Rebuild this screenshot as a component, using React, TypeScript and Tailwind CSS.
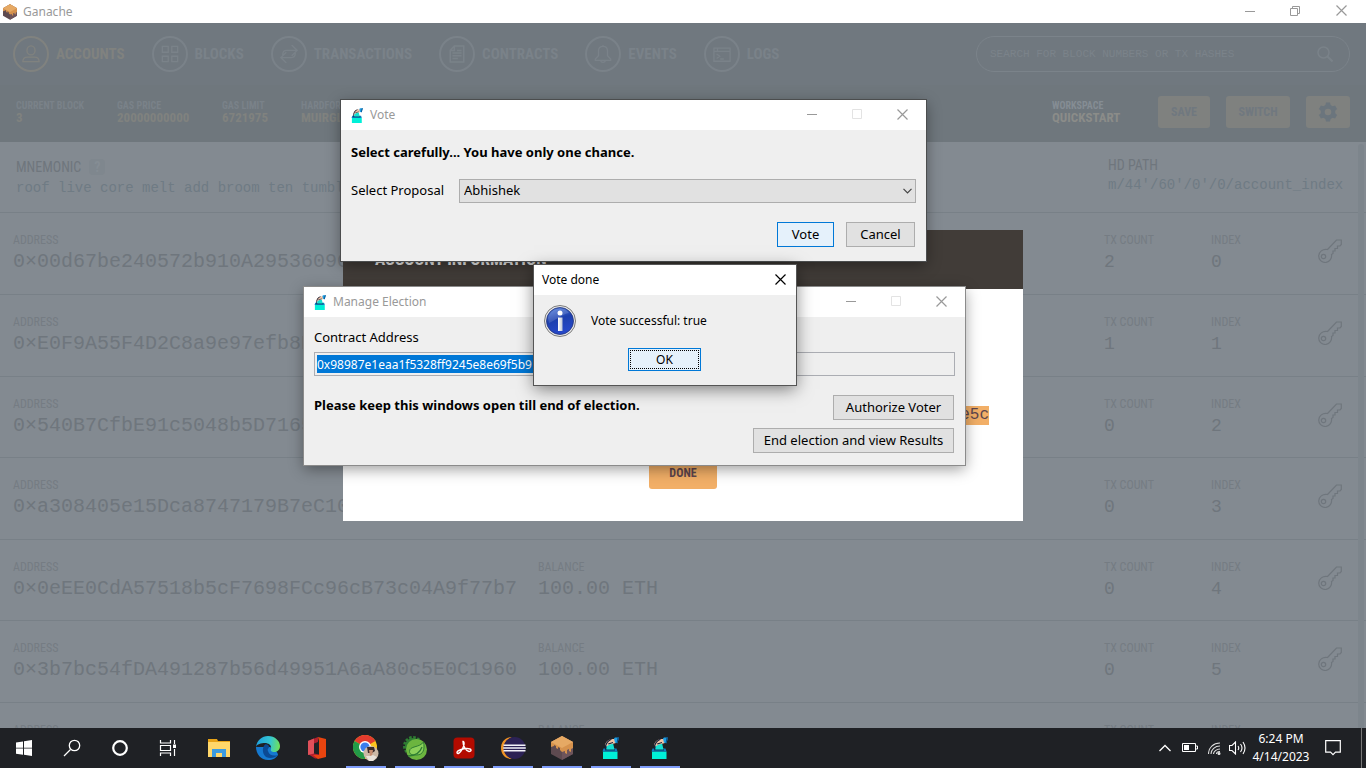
import React from "react";

const condensed = "font-['Roboto_Condensed','Liberation_Sans_Narrow','Roboto',sans-serif]";
const mono = "font-['Liberation_Mono',monospace]";

type IconProps = { className?: string };

function CakeIcon({ className }: IconProps) {
  return (
    <svg viewBox="0 0 22 24" className={className} aria-hidden="true">
      <path d="M11 0 22 6v12l-11 6L0 18V6z" fill="#5e4a50" />
      <path d="M11 12v12l11-6V6z" fill="#6d545b" />
      <path d="M11 0 22 6v6l-2 1v3l-2-1v-2l-2 1v4l-2-1v-2l-3 1-2-2v-2l-2-1v2l-2-1v-2l-2-1v1L0 11V6z" fill="#d6924d" />
      <path d="M11 0 22 6l-11 6L0 6z" fill="#e6a964" />
    </svg>
  );
}

function BallotIcon({ className }: IconProps) {
  return (
    <svg viewBox="0 0 17 22" className={className} aria-hidden="true">
      <path d="M1 14.500h14.500V22H1z" fill="#00f0d8" />
      <path d="M1.500 11.500h13l1 3H.500z" fill="#0c7fc0" />
      <path d="M3 12h10v1.500H3z" fill="#083a5e" />
      <path d="M4.500 7.500 11 6l1.500 6.500h-8z" fill="#14e0d2" />
      <path d="M3 8c1-4 4-6 9.500-6l1.500 1v3l-6 1.500-4 2z" fill="#f4c3a4" />
      <path d="M3 12c-.5-5 2-8.500 6-10l.5.7C6 4.500 4 7 4 12zM6 6.500l5-1.500v.9L6.500 7.500z" fill="#14203c" />
      <path d="m12 1.500 1-1h4l-1.500 5.800-2.500-.5z" fill="#1c9ee4" />
      <path d="M15.500.5H17l-1.500 5.800-1-.3z" fill="#0b4d86" />
    </svg>
  );
}

function CloseGlyph() {
  return (
    <svg viewBox="0 0 11 11" className="size-[11px]" fill="none" stroke="currentColor" strokeWidth="1.200" aria-hidden="true">
      <path d="m.5.5 10 10M10.5.5l-10 10" />
    </svg>
  );
}

function MinimizeGlyph() {
  return (
    <svg viewBox="0 0 10 10" className="size-[10px]" fill="none" stroke="currentColor" aria-hidden="true">
      <path d="M0 5.5h10" />
    </svg>
  );
}

function MaximizeGlyph() {
  return (
    <svg viewBox="0 0 10 10" className="size-[10px]" fill="none" stroke="currentColor" aria-hidden="true">
      <path d="M.5.5h9v9h-9z" />
    </svg>
  );
}

function RestoreGlyph() {
  return (
    <svg viewBox="0 0 10 10" className="size-[10px]" fill="none" stroke="currentColor" aria-hidden="true">
      <path d="M.5 2.5h7v7h-7zM2.5 2.5v-2h7v7h-2" />
    </svg>
  );
}

const stroke = { fill: "none", stroke: "currentColor", strokeWidth: 1.5 } as const;

const navItems: { label: string; icon: React.ReactNode }[] = [
  {
    label: "ACCOUNTS",
    icon: (
      <g {...stroke}>
        <ellipse cx="10" cy="6" rx="4.500" ry="5" />
        <path d="M1 18.500c0-4 2-5 5-5h8c3 0 5 1 5 5z" />
      </g>
    ),
  },
  {
    label: "BLOCKS",
    icon: (
      <g {...stroke}>
        <path d="M1.500 1.500h6.500v6.500h-6.500zM12 1.500h6.500v6.500H12zM1.500 12.500h6.500v6h-6.500zM12 12.500h6.500v6H12z" />
      </g>
    ),
  },
  {
    label: "TRANSACTIONS",
    icon: (
      <g {...stroke}>
        <path d="M3 11c0-4 2-5 4-5h12M13 0l6 6-6 6M17 9c0 4-2 5-4 5H1M7 8l-6 6 6 6" />
      </g>
    ),
  },
  {
    label: "CONTRACTS",
    icon: (
      <g {...stroke} strokeWidth={1.7}>
        <path d="M7 1h10.500v18h-15V6zM7 1v5H2.500M5 9h10M5 12h10M5 15h6M10 6h5" />
      </g>
    ),
  },
  {
    label: "EVENTS",
    icon: (
      <g {...stroke}>
        <path d="M10 1.500c-3.500 0-5 2-5 5v5.500l-3.500 3.500v1.500h17v-1.500L15 12V6.500c0-3-1.500-5-5-5zM7.500 17c0 3 5 3 5 0M10 0v2" />
      </g>
    ),
  },
  {
    label: "LOGS",
    icon: (
      <g {...stroke}>
        <path d="M1 3.500h18v14.500H1zM1 7h18M4 10l3.500 2.500L4 15M8 15.500h4M5 3.500V7" />
      </g>
    ),
  },
];

const stats = [
  { label: "CURRENT BLOCK", value: "3", width: "w-[101px]" },
  { label: "GAS PRICE", value: "20000000000", width: "w-[105px]" },
  { label: "GAS LIMIT", value: "6721975", width: "w-[79px]" },
  { label: "HARDFORK", value: "MUIRGLACIER", width: "w-[100px]" },
];

const accounts = [
  { address: "0×00d67be240572b910A29536090", balance: "", tx: 2 },
  { address: "0×E0F9A55F4D2C8a9e97efb8B", balance: "", tx: 1 },
  { address: "0×540B7CfbE91c5048b5D7165", balance: "", tx: 0 },
  { address: "0×a308405e15Dca8747179B7eC10", balance: "", tx: 0 },
  { address: "0×0eEE0CdA57518b5cF7698FCc96cB73c04A9f77b7", balance: "100.00 ETH", tx: 0 },
  { address: "0×3b7bc54fDA491287b56d49951A6aA80c5E0C1960", balance: "100.00 ETH", tx: 0 },
  { address: "", balance: "", tx: 0 },
];

function Header() {
  return (
    <header className="bg-[#70787f] text-[#7a8289]">
      <div className="flex h-[62px] items-center justify-between pl-[13px] pr-4">
        <nav className="flex gap-[27px]">
          {navItems.map((item, i) => (
            <a
              key={item.label}
              href="#"
              className={`flex items-center gap-[7px] text-[15px] font-bold ${condensed} ${i === 0 ? "text-[#80827f]" : ""}`}
            >
              <span className="flex size-9 items-center justify-center rounded-full border-2 border-current">
                <svg viewBox="0 0 20 20" className="size-[18px]" aria-hidden="true">
                  {item.icon}
                </svg>
              </span>
              {item.label}
            </a>
          ))}
        </nav>
        <div className="flex h-9 w-[374px] items-center rounded-full border border-[#7b838a] pl-[13px] pr-4">
          <input
            aria-label="Search"
            placeholder="SEARCH FOR BLOCK NUMBERS OR TX HASHES"
            className={`min-w-0 flex-1 bg-transparent text-[11px] outline-none placeholder:text-[#7b838a] ${mono}`}
          />
          <svg viewBox="0 0 16 16" className="size-4" {...stroke} aria-hidden="true">
            <circle cx="6.500" cy="6.500" r="5.500" />
            <path d="m10.500 10.500 5 5" strokeWidth="2" />
          </svg>
        </div>
      </div>
      <div className="flex h-[57px] items-center justify-between bg-[#6f777d] px-4 pb-1">
        <dl className={`flex font-bold ${condensed}`}>
          {stats.map((s) => (
            <div key={s.label} className={s.width}>
              <dt className="text-[10px] leading-3">{s.label}</dt>
              <dd className="text-[13px] leading-3 text-[#80827f]">{s.value}</dd>
            </div>
          ))}
        </dl>
        <div className={`flex items-center gap-4 ${condensed}`}>
          <dl className="w-[90px] font-bold">
            <dt className="text-[10px] leading-3 text-[#858d94]">WORKSPACE</dt>
            <dd className="text-[13px] leading-3 text-[#8b8c89]">QUICKSTART</dd>
          </dl>
          <button className="h-8 w-[52px] rounded-[3px] bg-[#7f817f] text-xs font-bold text-[#70787f]">SAVE</button>
          <button className="h-8 w-16 rounded-[3px] bg-[#7f817f] text-xs font-bold text-[#70787f]">SWITCH</button>
          <button aria-label="Settings" className="flex h-8 w-11 items-center justify-center rounded-[3px] bg-[#7f817f] text-[#6b757d]">
            <svg viewBox="0 0 20 20" className="size-5" fill="currentColor" aria-hidden="true">
              <path
                fillRule="evenodd"
                d="M8 .5h4l.6 2.600 2 1.100 2.500-.8 2 3.500-1.900 1.900v2.400l1.900 1.900-2 3.500-2.500-.8-2 1.100-.6 2.600H8l-.6-2.600-2-1.100-2.500.8-2-3.500 1.900-1.900V8.800L.9 6.900l2-3.500 2.500.8 2-1.100zM10 6.700a3.300 3.300 0 1 0 0 6.600 3.300 3.300 0 0 0 0-6.600z"
              />
            </svg>
          </button>
        </div>
      </div>
    </header>
  );
}

function Accounts() {
  const label = `text-xs leading-4 text-[#757c83] ${condensed}`;
  return (
    <main className="relative min-h-0 flex-1 overflow-hidden bg-[#838a91] text-[#6f767d]">
      <section className="flex h-[71px] justify-between border-b border-[#788087] px-4">
        <div className="pt-[17px]">
          <h2 className={`flex items-center gap-2 text-sm leading-4 ${condensed}`}>
            MNEMONIC
            <span className="flex h-4 w-4 items-center justify-center rounded bg-[#7f878e] font-bold text-[#858d94]">?</span>
          </h2>
          <p className={`mt-[3px] text-sm leading-5 text-[#6f7b84] ${mono}`}>roof live core melt add broom ten tumble</p>
        </div>
        <div className="w-[242px] pt-[15px]">
          <h2 className={`text-sm leading-4 ${condensed}`}>HD PATH</h2>
          <p className={`mt-[2px] text-sm leading-5 text-[#6f7b84] ${mono}`}>m/44'/60'/0'/0/account_index</p>
        </div>
      </section>
      <table className="w-full table-fixed border-collapse">
        <colgroup>
          <col className="w-[525px]" />
          <col />
          <col className="w-[107px]" />
          <col className="w-[102px]" />
          <col className="w-[60px]" />
        </colgroup>
        <tbody>
          {accounts.map((a, i) => (
            <tr key={i} className="h-[81px] border-b border-[#788087] even:h-[82px]">
              <td className="pl-[13px]">
                <div className={label}>ADDRESS</div>
                <div className={`mt-0.5 h-6 whitespace-nowrap text-[20px] leading-6 ${mono}`}>{a.address}</div>
              </td>
              <td className="pl-[13px]">
                <div className={label}>BALANCE</div>
                <div className={`mt-0.5 h-6 text-[20px] leading-6 ${mono}`}>{a.balance}</div>
              </td>
              <td className="pl-[7px]">
                <div className={label}>TX COUNT</div>
                <div className={`mt-0.5 h-6 text-lg leading-6 ${mono}`}>{a.tx}</div>
              </td>
              <td className="pl-[7px]">
                <div className={label}>INDEX</div>
                <div className={`mt-0.5 h-6 text-lg leading-6 ${mono}`}>{i}</div>
              </td>
              <td className="pb-1 pl-3">
                <button aria-label="Show keys" className="block">
                  <svg viewBox="0 0 24 24" className="size-6" fill="none" stroke="currentColor" strokeWidth="1.200" aria-hidden="true">
                    <path d="M9.500 10.500 18.500 1h4.800v4.500L22 7h-2.500v2.500H17V12h-2v2.500l-1.500 1c.6 3.500-1.500 7.500-6 8C3.500 23.500.7 20.500.7 17c0-4 4-7.500 8.800-6.500z" />
                    <circle cx="5.500" cy="17.500" r="2.200" />
                  </svg>
                </button>
              </td>
            </tr>
          ))}
        </tbody>
      </table>
      <div className="absolute inset-y-0 right-0.5 mt-0.5 w-1.5 rounded-t-full bg-[#7d858c]" />
    </main>
  );
}

function AccountModal() {
  return (
    <div className="absolute left-1/2 top-[230px] flex h-[291px] w-[680px] -translate-x-1/2 flex-col bg-white">
      <h2 className={`flex h-[59px] items-center bg-[#413c38] px-8 text-[17px] font-bold text-[#e8e8e8] ${condensed}`}>
        ACCOUNT INFORMATION
      </h2>
      <div className="flex flex-1 flex-col items-end justify-end px-[34px] pb-8">
        <span className={`mb-8 bg-[#f2af67] text-base leading-[19px] text-[#5e464d] ${mono}`}>e5c</span>
        <button className={`h-8 w-[68px] self-center rounded-[3px] bg-[#f2af67] text-xs font-bold text-[#5e464d] ${condensed}`}>
          DONE
        </button>
      </div>
    </div>
  );
}

function WindowTitle({ title }: { title: string }) {
  return (
    <div className="flex h-[30px] items-center bg-white pl-2.5 text-[#999]">
      <BallotIcon className="h-[15px] w-3" />
      <span className="ml-[7px] flex-1 text-xs">{title}</span>
      <div className="flex pb-0.5">
        <button aria-label="Minimize" className="flex w-[45px] items-center justify-center"><MinimizeGlyph /></button>
        <button aria-label="Maximize" className="flex w-[45px] items-center justify-center text-[#e3e3e3]"><MaximizeGlyph /></button>
        <button aria-label="Close" className="flex w-[47px] items-center justify-center"><CloseGlyph /></button>
      </div>
    </div>
  );
}

const plainButton = "h-[25px] border border-[#adadad] bg-[#e1e1e1] text-[13px]";

function VoteWindow() {
  return (
    <section className="absolute left-[341px] top-[100px] w-[585px] bg-[#efefef] text-black shadow-[0_0_0_1px_#4b4d4e,0_4px_14px_rgba(0,0,0,0.4)]">
      <WindowTitle title="Vote" />
      <div className="px-2.5 pb-3.5 pt-3">
        <h1 className="text-[13px] font-bold leading-5">Select carefully... You have only one chance.</h1>
        <div className="mt-[17px] flex items-center text-[13px]">
          <label htmlFor="proposal" className="w-[108px]">Select Proposal</label>
          <div className="relative flex-1">
            <select id="proposal" className="block h-6 w-full appearance-none border border-[#adadad] bg-[#e1e1e1] px-1">
              <option>Abhishek</option>
            </select>
            <svg viewBox="0 0 9 6" className="pointer-events-none absolute right-1 top-[9px] h-1.5 w-[9px]" fill="none" stroke="#444" strokeWidth="1.200" aria-hidden="true">
              <path d="m.5.8 4 4 4-4" />
            </svg>
          </div>
        </div>
        <div className="mt-[19px] flex justify-end gap-3 pr-px">
          <button className="h-[25px] w-[57px] border border-[#0078d7] bg-[#e5f1fb] text-[13px]">Vote</button>
          <button className={`w-[69px] ${plainButton}`}>Cancel</button>
        </div>
      </div>
    </section>
  );
}

function ElectionWindow() {
  return (
    <section className="absolute left-[304px] top-[287px] w-[661px] bg-[#efefef] text-black shadow-[0_0_0_1px_#8b8b8b,0_4px_14px_rgba(0,0,0,0.4)]">
      <WindowTitle title="Manage Election" />
      <div className="px-2.5 pb-3 pt-2.5">
        <label htmlFor="contract" className="block text-[13px] leading-5">Contract Address</label>
        <div className="mt-[5px] flex h-6 items-center border border-[#abadb3] p-0.5">
          <input
            id="contract"
            readOnly
            value="0x98987e1eaa1f5328ff9245e8e69f5b9"
            className="h-[18px] w-60 bg-[#0078d7] text-xs text-white outline-none"
          />
        </div>
        <div className="mt-[19px] flex justify-between pr-px">
          <p className="text-[13px] font-bold leading-5">Please keep this windows open till end of election.</p>
          <div className="flex flex-col items-end gap-2">
            <button className={`w-[121px] ${plainButton}`}>Authorize Voter</button>
            <button className={`w-[201px] ${plainButton}`}>End election and view Results</button>
          </div>
        </div>
      </div>
    </section>
  );
}

function InfoIcon() {
  return (
    <svg viewBox="0 0 32 32" className="size-8 shrink-0" aria-hidden="true">
      <defs>
        <linearGradient id="info-fill" x1="0" y1="0" x2="0.300" y2="1">
          <stop offset="0" stopColor="#5b86e0" />
          <stop offset="0.500" stopColor="#1c3fae" />
          <stop offset="1" stopColor="#2547c8" />
        </linearGradient>
        <linearGradient id="info-stem" x1="0" x2="1">
          <stop offset="0" stopColor="#fff" />
          <stop offset="1" stopColor="#bfc6d6" />
        </linearGradient>
      </defs>
      <circle cx="16" cy="16" r="15.500" fill="#e9e9e9" stroke="#7b7b7b" />
      <circle cx="16" cy="16" r="13.500" fill="url(#info-fill)" stroke="#24357a" strokeWidth=".8" />
      <path d="M4 13a12 12 0 0 1 21-5C19 9 12 15 5 18z" fill="#fff" opacity=".15" />
      <circle cx="16" cy="8" r="2.500" fill="#fff" />
      <path d="M14 12.500h4.500V26H14z" fill="url(#info-stem)" />
    </svg>
  );
}

function VoteDoneDialog() {
  return (
    <section role="dialog" aria-label="Vote done" className="absolute left-[534px] top-[265px] w-[262px] bg-[#efefef] pb-3.5 text-xs text-black shadow-[0_0_0_1px_#555,0_4px_16px_rgba(0,0,0,0.5)]">
      <div className="flex h-[30px] items-center justify-between bg-white pl-2 pr-2.5">
        <span>Vote done</span>
        <button aria-label="Close" className="pb-0.5"><CloseGlyph /></button>
      </div>
      <div className="flex items-center gap-[15px] px-2.5 pt-2.5">
        <InfoIcon />
        <span>Vote successful: true</span>
      </div>
      <button className="ml-[94px] mt-[11px] block h-[23px] w-[73px] border border-[#0078d7] bg-[#e5f1fb] p-px">
        <span className="flex h-full items-center justify-center border border-dotted border-black">OK</span>
      </button>
    </section>
  );
}

const systemItems: { name: string; icon: React.ReactNode }[] = [
  { name: "Start", icon: <path d="M4 6.500 11 5.500v6.200H4zM12 5.300 20 4v7.700h-8zM4 12.500h7v6.200l-7-1zM12 12.500h8V20l-8-1.200z" fill="#fff" /> },
  {
    name: "Search",
    icon: (
      <g fill="none" stroke="#fff" strokeWidth="1.300">
        <circle cx="14.500" cy="9.500" r="5.200" />
        <path d="M10.500 13.500 4 20" />
      </g>
    ),
  },
  { name: "Cortana", icon: <circle cx="12" cy="12" r="6.800" fill="none" stroke="#fff" strokeWidth="2.200" /> },
  {
    name: "Task view",
    icon: (
      <g fill="none" stroke="#fff" strokeWidth="1.200">
        <path d="M4.500 4v3h10V4M4.500 20v-3h10v3M4.500 9.500h10v5h-10zM18.500 4v4M18.500 13v7" />
        <path d="M17 8.500h3v3.500h-3z" fill="#fff" stroke="none" />
      </g>
    ),
  },
];

const appItems: { name: string; running?: boolean; icon: React.ReactNode }[] = [
  {
    name: "File Explorer",
    icon: (
      <svg viewBox="0 0 24 24" className="size-6" aria-hidden="true">
        <path d="M1 3h9l1 2h12v16H1z" fill="#e8a317" />
        <path d="M1 6h22v15H1z" fill="#ffd76a" />
        <path d="M5 13h14v8h-4v-4H9v4H5z" fill="#3b9be0" />
      </svg>
    ),
  },
  {
    name: "Edge",
    icon: (
      <svg viewBox="0 0 24 24" className="size-6" aria-hidden="true">
        <defs>
          <linearGradient id="edge-top" x1="0" y1="0.300" x2="1" y2="0.400">
            <stop offset="0" stopColor="#1da1e0" />
            <stop offset="0.600" stopColor="#36c6d0" />
            <stop offset="1" stopColor="#6fe05a" />
          </linearGradient>
        </defs>
        <path d="M0 11c0 7 5 13 12 13 5 0 8-2 10-5 0-3-4-6-8-8z" fill="#1579d0" />
        <path d="M0 11C1 4 6 0 12 0c7 0 12 5 12 10 0 4-3 6-6 6-2 0-4-1-3-3 1-4-3-6-6-6-4 0-8 1-9 4z" fill="url(#edge-top)" />
        <path d="M9 8.500c-3 3-3 9 1 12.500 4 2 9 1 12-2-5 1.500-9 0-10-4-1-2 1-3 1-4 0-2-2-3-4-2.500z" fill="#0b4a94" />
      </svg>
    ),
  },
  {
    name: "Office",
    icon: (
      <svg viewBox="0 0 24 24" className="size-6" aria-hidden="true">
        <path d="m3 5 10-4v5L9 7.500v10l5 1v4h-4L3 18z" fill="#b3202f" />
        <path d="m3 5 6-2.500v15L3 19z" fill="#e0505a" />
        <path d="m13 1 8 2v18l-8 2-5-4h6V5z" fill="#e8440f" />
      </svg>
    ),
  },
  {
    name: "Chrome",
    running: true,
    icon: (
      <svg viewBox="0 0 26 26" className="size-[26px]" aria-hidden="true">
        <circle cx="12" cy="12" r="12" fill="#fcc31e" />
        <path d="M12 12 1.600 6A12 12 0 0 1 22.400 6z" fill="#e33b2e" />
        <path d="M12 12 1.600 6A12 12 0 0 0 12 24z" fill="#229b48" />
        <circle cx="12" cy="12" r="6" fill="#fff" />
        <circle cx="12" cy="12" r="4.600" fill="#3b7ded" />
        <circle cx="18" cy="18.500" r="7.500" fill="#cdb9a6" />
        <path d="M14 12h7l1 4-3 2h-4z" fill="#3a2a2a" />
        <path d="M16 15h4l-1 6h-2z" fill="#c98e70" />
        <path d="m13 21 4 0 3-1 4 2-4 4h-4z" fill="#e9e2da" />
      </svg>
    ),
  },
  {
    name: "Spring Tools",
    running: true,
    icon: (
      <svg viewBox="0 0 24 24" className="size-6" aria-hidden="true">
        <circle cx="10" cy="10" r="8.500" fill="none" stroke="#2f7d33" strokeWidth="3" strokeDasharray="2.500 1.500" />
        <circle cx="10" cy="10" r="8" fill="#2f7d33" />
        <circle cx="13.500" cy="13.500" r="10.500" fill="#6cb53f" />
        <path d="M20.500 6c1.500 7 0 13-7 13-3 0-7 0-7-3.500 0-6 10-3.500 14-9.500z" fill="#8bd05a" stroke="#2f7d33" />
        <path d="M5 20c7 0 12-3 14-9" fill="none" stroke="#2f7d33" strokeWidth="1.300" />
      </svg>
    ),
  },
  {
    name: "Acrobat",
    running: true,
    icon: (
      <svg viewBox="0 0 24 24" className="size-6" aria-hidden="true">
        <rect x="1.500" y="1.500" width="21" height="21" rx="4" fill="#b30b00" />
        <path d="M11 5.500c2 0 1 5-1 8-2 4-5 5-5 3s6-4 10-4c5 0 5 3 2 3-3-.5-6-5-6-10z" fill="none" stroke="#fff" strokeWidth="1.400" />
      </svg>
    ),
  },
  {
    name: "Eclipse",
    running: true,
    icon: (
      <svg viewBox="0 0 26 24" className="h-6 w-[26px]" aria-hidden="true">
        <path d="M12 1C4 1 1 7 1 12s3 11 11 11C6 20 4 16 4 12s2-8 8-11z" fill="#f09325" />
        <circle cx="14.500" cy="12" r="11" fill="#2c2255" />
        <path d="M3.500 8.500h22v1.500h-22zM3.200 11.200h22.600v1.500H3.200zM3.500 14h22v1.500h-22z" fill="#f4f4fa" />
      </svg>
    ),
  },
  { name: "Ganache", running: true, icon: <CakeIcon className="h-6 w-[22px]" /> },
  { name: "Manage Election", running: true, icon: <BallotIcon className="h-[22px] w-[17px]" /> },
  { name: "Vote", running: true, icon: <BallotIcon className="h-[22px] w-[17px]" /> },
];

function Taskbar() {
  return (
    <footer className="flex h-10 shrink-0 items-stretch bg-[#1f2125] text-white">
      <div className="flex">
        {systemItems.map((item) => (
          <button key={item.name} aria-label={item.name} className="flex w-12 items-center justify-center">
            <svg viewBox="0 0 24 24" className="size-6" aria-hidden="true">{item.icon}</svg>
          </button>
        ))}
      </div>
      <div className="flex pl-0.5">
        {appItems.map((item) => (
          <button key={item.name} aria-label={item.name} className="flex w-[49px] flex-col items-center">
            <span className="flex flex-1 items-center pt-0.5">{item.icon}</span>
            <span className={`h-0.5 w-10 ${item.running ? "bg-[#7f9dfa]" : ""}`} />
          </button>
        ))}
      </div>
      <div className="ml-auto flex items-center">
        <svg viewBox="0 0 12 8" className="h-2 w-3" fill="none" stroke="#fff" strokeWidth="1.300" aria-hidden="true">
          <path d="m.5 7 5.500-5.500L11.500 7" />
        </svg>
        <svg viewBox="0 0 16 10" className="ml-[11px] h-2.5 w-4" aria-hidden="true">
          <path d="M.5.5h13v8H.500zM14 3h1.500v3H14" fill="none" stroke="#fff" />
          <path d="M2 2h5v5H2z" fill="#fff" />
        </svg>
        <svg viewBox="0 0 13 13" className="ml-[10px] size-[13px]" fill="none" stroke="#ddd" strokeWidth="1.100" aria-hidden="true">
          <path d="M.5 12C.5 5.500 5.500 1 12 1M3 12c0-4.500 4-8 9-8M5.500 12c0-2.500 3-5 6.500-5M8.500 12c0-1.500 1.500-2.500 3.500-2.500" />
          <circle cx="11" cy="11.500" r="1" fill="#fff" />
        </svg>
        <svg viewBox="0 0 17 14" className="ml-2 h-3.5 w-[17px]" fill="none" stroke="#fff" strokeWidth="1.100" aria-hidden="true">
          <path d="M.5 4.500H3l3.500-3.500v12L3 9.500H.500zM9 5q1.500 2 0 4M11.500 3q3 4 0 8M14 1q4 6 0 12" />
        </svg>
        <div className="w-[70px] text-center text-xs leading-[18px]">
          <div>6:24 PM</div>
          <div>4/14/2023</div>
        </div>
        <button aria-label="Notifications" className="ml-[9px]">
          <svg viewBox="0 0 16 16" className="size-4" fill="none" stroke="#fff" strokeWidth="1.200" aria-hidden="true">
            <path d="M.7.700h14.600v11.500h-4.800L8 14.700l-2.500-2.500H.700z" />
          </svg>
        </button>
        <span className="ml-5 mr-1 h-10 w-px bg-[#777]" />
      </div>
    </footer>
  );
}

export default function App() {
  return (
    <div className="relative flex h-screen flex-col overflow-hidden font-['Noto_Sans',sans-serif]">
      <div className="flex h-[23px] shrink-0 items-center bg-white pl-[3px] text-xs text-[#999]">
        <CakeIcon className="h-4 w-[14px]" />
        <span className="ml-1.5 flex-1">Ganache</span>
        <div className="flex pb-0.5">
          <button aria-label="Minimize" className="flex w-[45px] items-center justify-center"><MinimizeGlyph /></button>
          <button aria-label="Restore" className="flex w-[45px] items-center justify-center"><RestoreGlyph /></button>
          <button aria-label="Close" className="flex w-[49px] items-center justify-center"><CloseGlyph /></button>
        </div>
      </div>
      <Header />
      <Accounts />
      <Taskbar />
      <AccountModal />
      <VoteWindow />
      <ElectionWindow />
      <VoteDoneDialog />
    </div>
  );
}
